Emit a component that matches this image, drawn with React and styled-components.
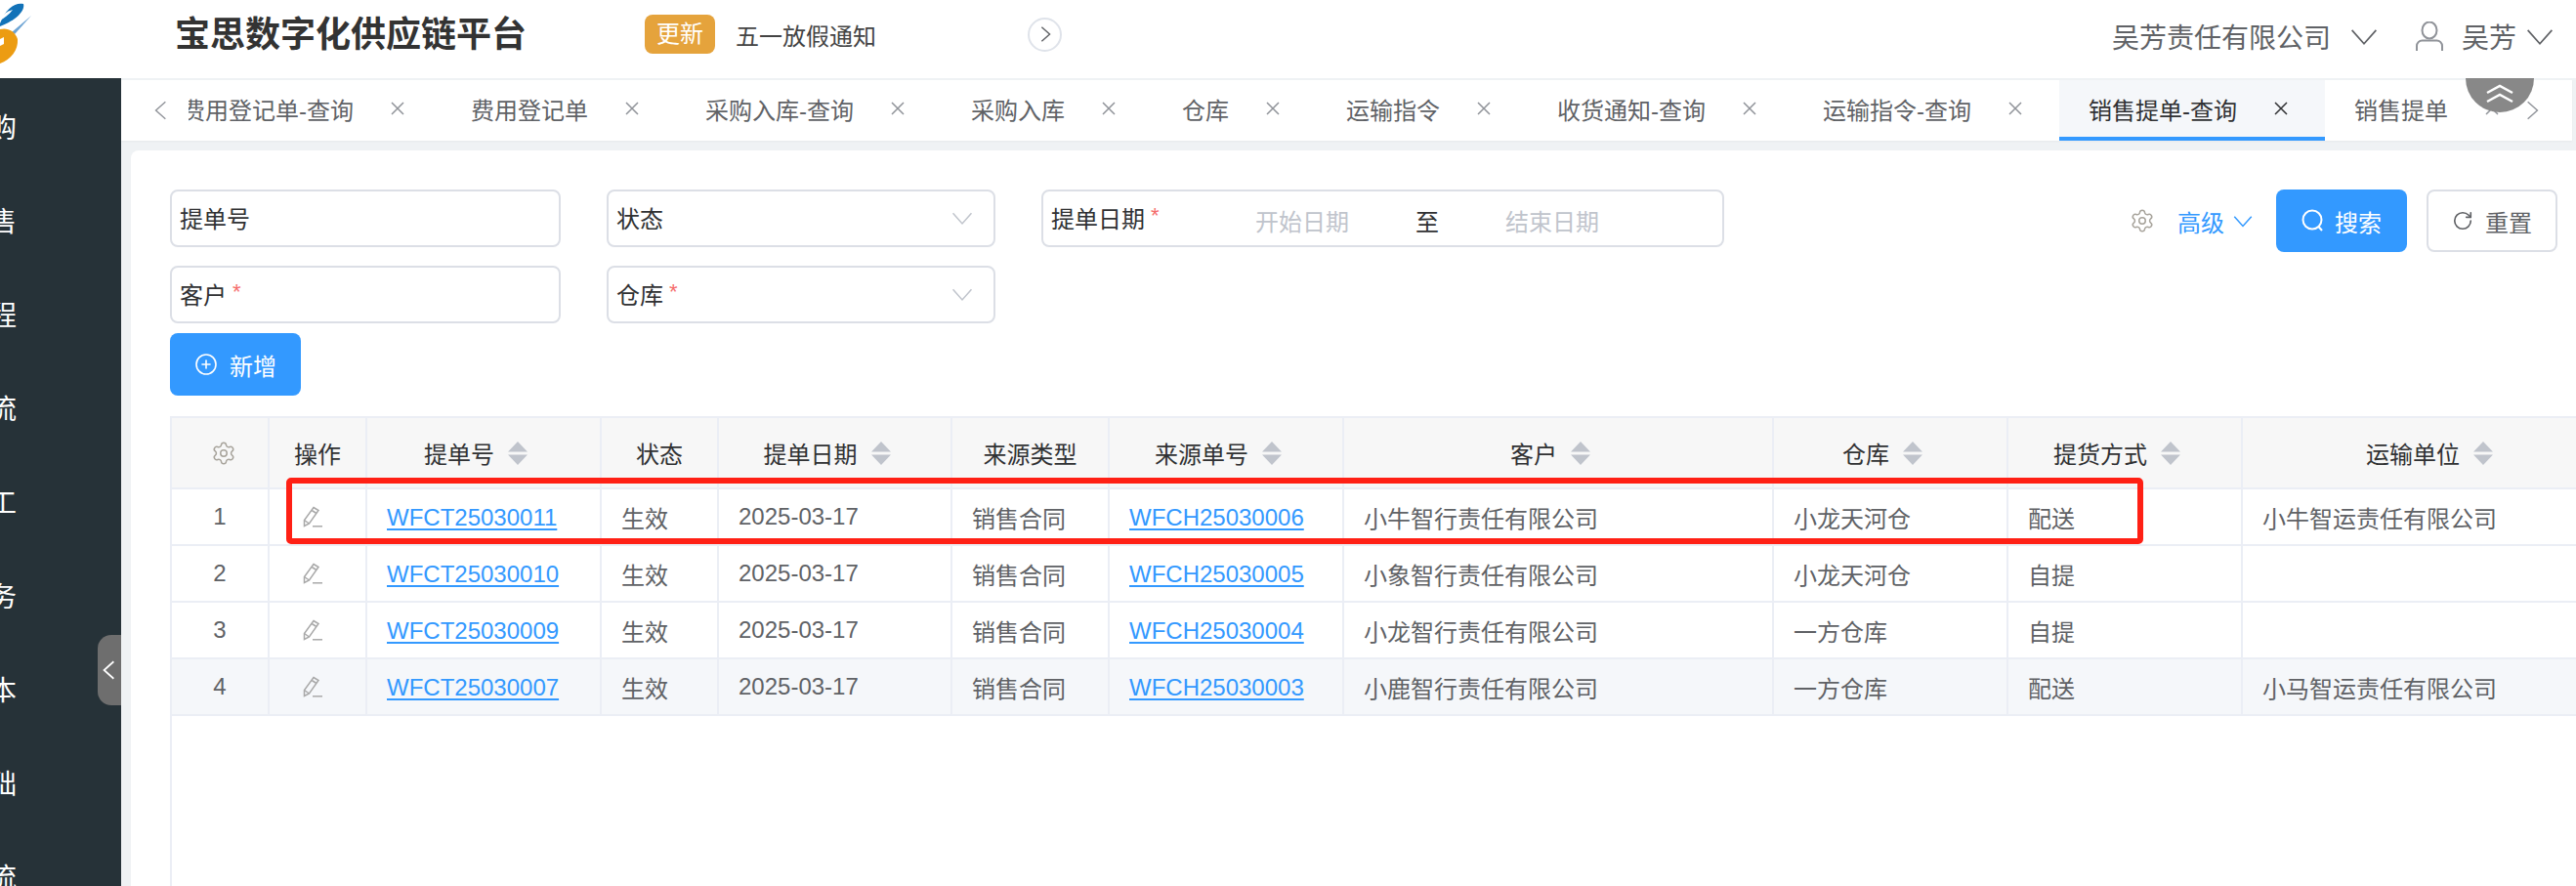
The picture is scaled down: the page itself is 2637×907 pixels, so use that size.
import styled, { createGlobalStyle } from 'styled-components'
import { CirclePlus, RotateCw, Settings } from 'lucide-react'

const MENU_ITEMS = ['采购', '销售', '工程', '物流', '加工', '财务', '成本', '基础', '物流']

const TABS = [
    { label: '费用登记单-查询' },
    { label: '费用登记单' },
    { label: '采购入库-查询' },
    { label: '采购入库' },
    { label: '仓库' },
    { label: '运输指令' },
    { label: '收货通知-查询' },
    { label: '运输指令-查询' },
    { label: '销售提单-查询', active: true },
    { label: '销售提单' },
]

const COLUMNS = [
    { width: 100 },
    { width: 100, title: '操作' },
    { width: 240, title: '提单号', sortable: true },
    { width: 120, title: '状态' },
    { width: 239, title: '提单日期', sortable: true },
    { width: 161, title: '来源类型' },
    { width: 240, title: '来源单号', sortable: true },
    { width: 440, title: '客户', sortable: true },
    { width: 240, title: '仓库', sortable: true },
    { width: 240, title: '提货方式', sortable: true },
    { width: 400, title: '运输单位', sortable: true },
]

const ROWS = [{
    no: 'WFCT25030011',
    source: 'WFCH25030006',
    customer: '小牛智行责任有限公司',
    warehouse: '小龙天河仓',
    delivery: '配送',
    carrier: '小牛智运责任有限公司',
}, {
    no: 'WFCT25030010',
    source: 'WFCH25030005',
    customer: '小象智行责任有限公司',
    warehouse: '小龙天河仓',
    delivery: '自提',
    carrier: '',
}, {
    no: 'WFCT25030009',
    source: 'WFCH25030004',
    customer: '小龙智行责任有限公司',
    warehouse: '一方仓库',
    delivery: '自提',
    carrier: '',
}, {
    no: 'WFCT25030007',
    source: 'WFCH25030003',
    customer: '小鹿智行责任有限公司',
    warehouse: '一方仓库',
    delivery: '配送',
    carrier: '小马智运责任有限公司',
    hovered: true,
}]

const GlobalStyle = createGlobalStyle`
    html, body {
        margin: 0;
        height: 100%;
        overflow: hidden;
        background: #fff;
    }
    body {
        font-family: "Liberation Sans", "Noto Sans CJK SC", sans-serif;
        font-size: 24px;
    }
    * {
        box-sizing: border-box;
    }
`

const Page = styled.div`
    display: flex;
    flex-direction: column;
    width: 2637px;
    height: 907px;
    overflow: hidden;
`

const Header = styled.header`
    display: flex;
    align-items: center;
    flex: 0 0 80px;
    padding: 0 20px 10px 0;
    background: #fff;
`

const LogoBox = styled.div`
    flex: 0 0 179px;
    height: 70px;
`

const Title = styled.h1`
    margin: 2px 121px 0 0;
    font-size: 36px;
    font-weight: 700;
    line-height: 40px;
    color: #333;
`

const Badge = styled.span`
    width: 72px;
    height: 40px;
    border-radius: 8px;
    background: #e5a33c;
    color: #fff;
    line-height: 40px;
    text-align: center;
`

const Notice = styled.span`
    margin-left: 21px;
    color: #444;
`

const RoundButton = styled.button`
    display: flex;
    align-items: center;
    justify-content: center;
    width: 35px;
    height: 35px;
    margin-left: 155px;
    padding: 0;
    border: 2px solid #dfe3ea;
    border-radius: 50%;
    background: #fff;
    color: #606266;
`

const UserArea = styled.div`
    display: flex;
    align-items: center;
    margin: 4px 0 0 auto;
    font-size: 28px;
    color: #606266;
`

const Company = styled.span`
    margin-right: 17px;
`

const UserName = styled.span`
    margin: 0 7px 0 19px;
`

const UserIcon = styled.svg`
    margin-left: 36px;
`

const Main = styled.div`
    position: relative;
    display: flex;
    flex: 1;
    min-height: 0;
`

const Sidebar = styled.aside`
    position: relative;
    flex: 0 0 124px;
    padding-top: 4px;
    background: #263238;
`

const Menu = styled.ul`
    margin: 0 0 0 -39px;
    padding: 0;
    list-style: none;
`

const MenuItem = styled.li`
    height: 96px;
    font-size: 28px;
    line-height: 96px;
    color: #fff;
    white-space: nowrap;
`

const CollapseHandle = styled.div`
    position: absolute;
    top: 570px;
    right: 0;
    display: flex;
    align-items: center;
    justify-content: center;
    width: 24px;
    height: 72px;
    border-radius: 14px 0 0 14px;
    background: #6e6e6e;
    color: #fff;
`

const Workspace = styled.div`
    display: flex;
    flex-direction: column;
    flex: 1;
    min-width: 0;
    background: #eff2f4;
`

const TabBar = styled.div`
    display: flex;
    flex: 0 0 62px;
    margin: 2px 4px 0 0;
    background: #fff;
    box-shadow: 0 1px 2px rgba(0, 0, 0, 0.04);
`

const TabArrow = styled.div`
    display: flex;
    align-items: center;
    flex: 0 0 ${(props) => props.$width}px;
    padding-left: ${(props) => props.$inset}px;
    color: #909399;
`

const TabStrip = styled.div`
    flex: 1;
    min-width: 0;
    overflow: hidden;
`

const TabTrack = styled.div`
    display: flex;
    width: max-content;
    height: 100%;
    margin-left: -37px;
`

const Tab = styled.div`
    display: flex;
    align-items: center;
    height: 100%;
    padding: 0 38px 0 30px;
    border-bottom: 4px solid ${(props) => (props.$active ? '#3399ff' : 'transparent')};
    background: ${(props) => (props.$active ? '#f5f7fa' : '#fff')};
    color: ${(props) => (props.$active ? '#303133' : '#606266')};
    white-space: nowrap;
`

const TabClose = styled.svg`
    margin-left: 38px;
    color: ${(props) => (props.$active ? '#303133' : '#909399')};
`

const FoldButton = styled.div`
    position: absolute;
    top: 0;
    right: 43px;
    display: flex;
    align-items: flex-start;
    justify-content: center;
    width: 70px;
    height: 35px;
    padding-top: 6px;
    border-radius: 0 0 35px 35px;
    background: #888;
`

const Card = styled.section`
    display: flex;
    flex-direction: column;
    flex: 1;
    min-height: 0;
    margin: 10px 0 0 10px;
    padding: 40px 19px 0 40px;
    border-radius: 8px 0 0 0;
    background: #fff;
`

const FilterRow = styled.div`
    display: flex;
    align-items: flex-start;
    justify-content: space-between;
`

const FilterGrid = styled.div`
    display: grid;
    grid-template-columns: 400px 398px 699px;
    grid-auto-rows: 59px;
    column-gap: 47px;
    row-gap: 19px;
`

const Field = styled.div`
    display: flex;
    align-items: center;
    padding: 0 19px 2px 8px;
    border: 2px solid #dcdfe6;
    border-radius: 8px;
    color: #303133;
`

const DateField = styled(Field)`
    display: grid;
    grid-template-columns: 209px 164px 92px auto;
`

const DateValue = styled.span`
    padding-top: 6px;
    color: ${(props) => (props.$empty ? '#c0c4cc' : '#303133')};
`

const Required = styled.span`
    margin-left: 6px;
    font-size: 22px;
    color: #f56c6c;
    vertical-align: 5px;
`

const SelectArrow = styled.svg`
    margin-left: auto;
    color: #c0c4cc;
`

const Actions = styled.div`
    display: flex;
    align-items: center;
    height: 64px;
`

const AdvancedLink = styled.span`
    display: flex;
    align-items: center;
    gap: 7px;
    margin: 0 22px 0 23px;
    color: #3399ff;
`

const Button = styled.button`
    display: flex;
    align-items: center;
    justify-content: center;
    gap: 12px;
    width: 134px;
    height: 64px;
    padding: 0;
    border: ${(props) => (props.$primary ? 'none' : '2px solid #dcdfe6')};
    border-radius: 8px;
    background: ${(props) => (props.$primary ? '#3399ff' : '#fff')};
    color: ${(props) => (props.$primary ? '#fff' : '#606266')};
    font: inherit;
`

const ResetButton = styled(Button)`
    margin-left: 20px;
`

const AddButton = styled(Button)`
    margin-top: 10px;
`

const TableWrap = styled.div`
    position: relative;
    flex: 1;
    min-height: 0;
    margin: 21px -19px 0 0;
    border-left: 2px solid #ebeef5;
    overflow: hidden;
`

const Table = styled.table`
    width: 2520px;
    border-collapse: separate;
    border-spacing: 0;
    table-layout: fixed;
`

const HeadCell = styled.th`
    height: 75px;
    padding: 0;
    border-top: 2px solid #ebeef5;
    border-right: 2px solid #ebeef5;
    border-bottom: 2px solid #ebeef5;
    background: #f7f7f7;
    color: #303133;
    font-weight: 400;
`

const HeadInner = styled.div`
    display: flex;
    align-items: center;
    justify-content: center;
`

const HeadGear = styled(Settings)`
    margin-left: 8px;
`

const SortIcon = styled.svg`
    margin: 0 16px 0 14px;
    color: #c0c4cc;
`

const Cell = styled.td`
    height: 58px;
    padding: 0 0 0 20px;
    border-right: 2px solid #ebeef5;
    border-bottom: 2px solid #ebeef5;
    background: ${(props) => (props.$hovered ? '#f5f7fa' : '#fff')};
    color: #606266;
    white-space: nowrap;
`

const IndexCell = styled(Cell)`
    padding: 0;
    text-align: center;
`

const ActionCell = styled(Cell)`
    padding-left: 34px;
    line-height: 0;
`

const DocLink = styled.a`
    color: #3399ff;
    text-decoration: underline;
    text-decoration-thickness: 2px;
    text-underline-offset: 3px;
    vertical-align: -2px;
`

const Highlight = styled.div`
    position: absolute;
    top: 63px;
    left: 117px;
    width: 1901px;
    height: 68px;
    border: 6px solid #ff2015;
    border-radius: 5px;
    pointer-events: none;
`

function Chevron({ dir = 'down', size = 22, className, weight = 1.6 }) {
    const points = {
        down: '3,7 11,16 19,7',
        up: '3,15 11,6 19,15',
        left: '15,3 6,11 15,19',
        right: '7,3 16,11 7,19',
    }
    return (
        <svg className={className} width={size} height={size} viewBox='0 0 22 22' fill='none' stroke='currentColor' strokeWidth={weight}>
            <polyline points={points[dir]} />
        </svg>
    )
}

function CloseGlyph({ active }) {
    return (
        <TabClose $active={active} width='14' height='14' viewBox='0 0 14 14' fill='none' stroke='currentColor' strokeWidth='1.5'>
            <path d='M1 1 L13 13 M13 1 L1 13' />
        </TabClose>
    )
}

function SortGlyph() {
    return (
        <SortIcon width='20' height='24' viewBox='0 0 20 24' fill='currentColor'>
            <path d='M10 0 L20 10.5 H0 Z M10 24 L0 13.5 H20 Z' />
        </SortIcon>
    )
}

function PencilGlyph() {
    return (
        <svg width='20' height='22' viewBox='0 0 20 22' fill='none' stroke='#a9a9a9' strokeWidth='1.5'>
            <path d='M11 1.5 L16 4.5 L6.5 18 L1.5 20.5 L1.5 14.5 Z' />
            <path d='M9.2 4.5 L14 7.5 M1.5 14.5 L6.5 18' />
            <path d='M10 20.8 H20' />
        </svg>
    )
}

function SearchGlyph() {
    return (
        <svg width='22' height='24' viewBox='0 0 22 24' fill='none' stroke='currentColor' strokeWidth='2'>
            <circle cx='11' cy='11' r='9.5' />
            <path d='M17.5 18 L21 22' />
        </svg>
    )
}

function Logo() {
    return (
        <svg width='34' height='68' viewBox='0 0 34 68'>
            <path d='M0 24 C6 8 16 2 24 4 C26 11 16 21 0 27 Z' fill='#1272b8' />
            <path d='M0 19 C4 14 8 11 13 10 C9 15 5 18 0 21 Z' fill='#fff' />
            <path d='M12 33 L32 16 L15 35 Z' fill='#6ea4d4' />
            <path d='M0 30 C7 28 15 31 18 40 C19 51 11 61 0 65 Z' fill='#ec9c12' />
            <path d='M0 40 L4 38 L4 45 L0 47 Z' fill='#fff' />
        </svg>
    )
}

export default function App() {
    return (
        <Page>
            <GlobalStyle />
            <Header>
                <LogoBox>
                    <Logo />
                </LogoBox>
                <Title>宝思数字化供应链平台</Title>
                <Badge>更新</Badge>
                <Notice>五一放假通知</Notice>
                <RoundButton>
                    <Chevron dir='right' size={20} />
                </RoundButton>
                <UserArea>
                    <Company>吴芳责任有限公司</Company>
                    <Chevron size={34} weight={1.1} />
                    <UserIcon width='28' height='30' viewBox='0 0 28 30' fill='none' stroke='#909399' strokeWidth='2'>
                        <ellipse cx='14' cy='9' rx='7.5' ry='8.5' />
                        <path d='M1 30 V25 A5.5 5.5 0 0 1 6.5 19.5 H21.5 A5.5 5.5 0 0 1 27 25 V30' />
                    </UserIcon>
                    <UserName>吴芳</UserName>
                    <Chevron size={34} weight={1.1} />
                </UserArea>
            </Header>
            <Main>
                <Sidebar>
                    <Menu>
                        {MENU_ITEMS.map((item, index) => (
                            <MenuItem key={index}>{item}</MenuItem>
                        ))}
                    </Menu>
                    <CollapseHandle>
                        <Chevron dir='left' size={24} />
                    </CollapseHandle>
                </Sidebar>
                <Workspace>
                    <TabBar>
                        <TabArrow $width={69} $inset={29}>
                            <Chevron dir='left' size={24} weight={1.3} />
                        </TabArrow>
                        <TabStrip>
                            <TabTrack>
                                {TABS.map((tab) => (
                                    <Tab key={tab.label} $active={tab.active}>
                                        {tab.label}
                                        <CloseGlyph active={tab.active} />
                                    </Tab>
                                ))}
                            </TabTrack>
                        </TabStrip>
                        <TabArrow $width={63} $inset={10}>
                            <Chevron dir='right' size={24} weight={1.3} />
                        </TabArrow>
                    </TabBar>
                    <FoldButton>
                        <svg width='30' height='20' viewBox='0 0 30 20' fill='none' stroke='#fff' strokeWidth='2.5'>
                            <path d='M2 9 L15 2 L28 9 M2 18 L15 11 L28 18' />
                        </svg>
                    </FoldButton>
                    <Card>
                        <FilterRow>
                            <FilterGrid>
                                <Field>提单号</Field>
                                <Field>
                                    状态
                                    <SelectArrow as={Chevron} size={26} weight={1.3} />
                                </Field>
                                <DateField>
                                    <span>
                                        提单日期
                                        <Required>*</Required>
                                    </span>
                                    <DateValue $empty>开始日期</DateValue>
                                    <DateValue>至</DateValue>
                                    <DateValue $empty>结束日期</DateValue>
                                </DateField>
                                <Field>
                                    <span>
                                        客户
                                        <Required>*</Required>
                                    </span>
                                </Field>
                                <Field>
                                    <span>
                                        仓库
                                        <Required>*</Required>
                                    </span>
                                    <SelectArrow as={Chevron} size={26} weight={1.3} />
                                </Field>
                            </FilterGrid>
                            <Actions>
                                <Settings size={26} color='#a8a49c' strokeWidth={1.4} />
                                <AdvancedLink>
                                    高级
                                    <Chevron size={24} weight={1.4} />
                                </AdvancedLink>
                                <Button $primary>
                                    <SearchGlyph />
                                    搜索
                                </Button>
                                <ResetButton>
                                    <RotateCw size={22} strokeWidth={1.8} />
                                    重置
                                </ResetButton>
                            </Actions>
                        </FilterRow>
                        <div>
                            <AddButton $primary>
                                <CirclePlus size={24} strokeWidth={1.6} />
                                新增
                            </AddButton>
                        </div>
                        <TableWrap>
                            <Table>
                                <colgroup>
                                    {COLUMNS.map((column, index) => (
                                        <col key={index} width={column.width} />
                                    ))}
                                </colgroup>
                                <thead>
                                    <tr>
                                        {COLUMNS.map((column, index) => (
                                            <HeadCell key={index}>
                                                <HeadInner>
                                                    {index === 0 && <HeadGear size={26} color='#a8a49c' strokeWidth={1.4} />}
                                                    {column.title}
                                                    {column.sortable && <SortGlyph />}
                                                </HeadInner>
                                            </HeadCell>
                                        ))}
                                    </tr>
                                </thead>
                                <tbody>
                                    {ROWS.map((row, index) => (
                                        <tr key={row.no}>
                                            <IndexCell $hovered={row.hovered}>{index + 1}</IndexCell>
                                            <ActionCell $hovered={row.hovered}>
                                                <PencilGlyph />
                                            </ActionCell>
                                            <Cell $hovered={row.hovered}>
                                                <DocLink>{row.no}</DocLink>
                                            </Cell>
                                            <Cell $hovered={row.hovered}>生效</Cell>
                                            <Cell $hovered={row.hovered}>2025-03-17</Cell>
                                            <Cell $hovered={row.hovered}>销售合同</Cell>
                                            <Cell $hovered={row.hovered}>
                                                <DocLink>{row.source}</DocLink>
                                            </Cell>
                                            <Cell $hovered={row.hovered}>{row.customer}</Cell>
                                            <Cell $hovered={row.hovered}>{row.warehouse}</Cell>
                                            <Cell $hovered={row.hovered}>{row.delivery}</Cell>
                                            <Cell $hovered={row.hovered}>{row.carrier}</Cell>
                                        </tr>
                                    ))}
                                </tbody>
                            </Table>
                            <Highlight />
                        </TableWrap>
                    </Card>
                </Workspace>
            </Main>
        </Page>
    )
}
